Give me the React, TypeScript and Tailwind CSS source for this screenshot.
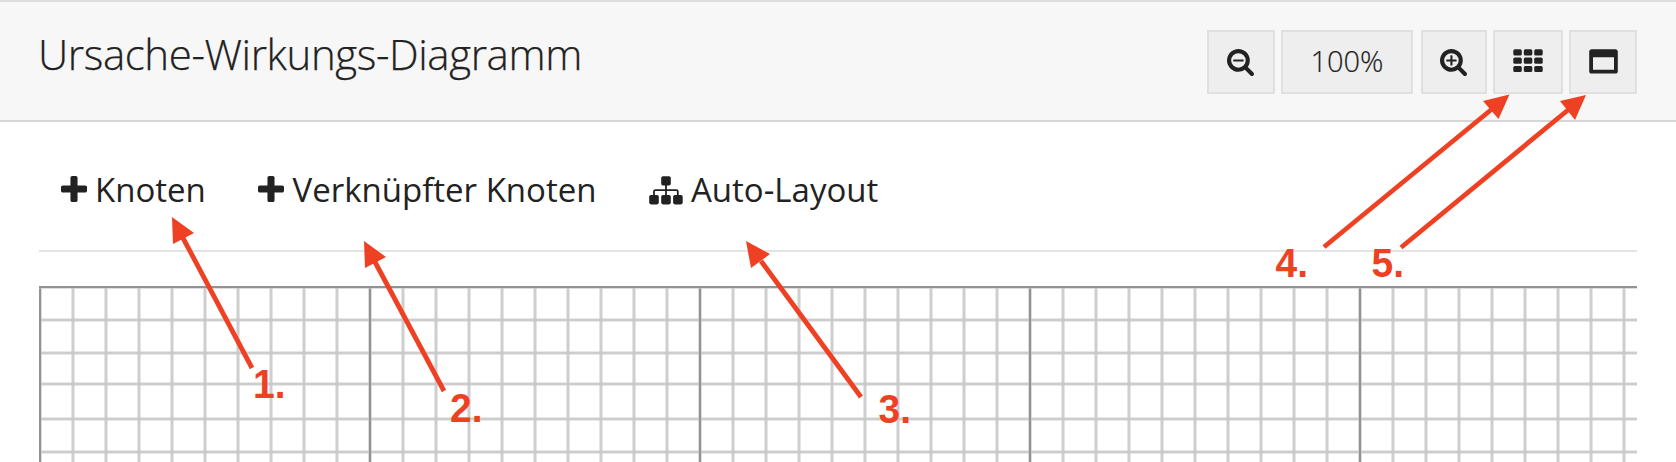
import React from 'react';

const RED = '#ee4123';
const SEARCH_RING =
  'M1216 832q0-185-131.5-316.5t-316.5-131.5-316.5 131.5-131.5 316.5 131.5 316.5 316.5 131.5 316.5-131.5 131.5-316.5zm512 832q0 53-37.5 90.5t-90.5 37.5q-54 0-90-38l-343-342q-179 124-399 124-143 0-273.5-55.5t-225-150-150-225-55.5-273.5 55.5-273.5 150-225 225-150 273.5-55.5 273.5 55.5 225 150 150 225 55.5 273.5q0 220-124 399l343 343q37 37 37 90z';

function SearchIcon({ plus = false }: { plus?: boolean }) {
  return (
    <svg className="mr-[2px] h-[27px] w-[27px]" viewBox="64 128 1664 1664" fill="currentColor">
      <path d={SEARCH_RING} />
      <rect x="448" y="768" width="640" height="128" rx="32" />
      {plus && <rect x="704" y="512" width="128" height="640" rx="32" />}
    </svg>
  );
}

function GridIcon() {
  return (
    <svg className="h-[24px] w-[30px]" viewBox="0 0 30 24" fill="currentColor">
      {[0.3, 10.8, 21.2].map((x) =>
        [0.3, 8.6, 16.9].map((y) => <rect key={`${x}-${y}`} x={x} y={y} width="8.5" height="6.2" rx="1.6" />),
      )}
    </svg>
  );
}

function WindowIcon() {
  return (
    <svg className="h-[25px] w-[29px]" viewBox="0 0 29 25" fill="currentColor" fillRule="evenodd">
      <path d="M2.8 0.2H26.2A2.6 2.6 0 0 1 28.8 2.8V22A2.6 2.6 0 0 1 26.2 24.6H2.8A2.6 2.6 0 0 1 0.2 22V2.8A2.6 2.6 0 0 1 2.8 0.2ZM4 8.2V20.8H25V8.2Z" />
    </svg>
  );
}

function PlusIcon() {
  return (
    <svg className="h-[26px] w-[26px] shrink-0" viewBox="192 128 1408 1408" fill="currentColor">
      <path d="M1600 736v192q0 40-28 68t-68 28h-416v416q0 40-28 68t-68 28h-192q-40 0-68-28t-28-68v-416h-416q-40 0-68-28t-28-68v-192q0-40 28-68t68-28h416v-416q0-40 28-68t68-28h192q40 0 68 28t28 68v416h416q40 0 68 28t28 68z" />
    </svg>
  );
}

function SitemapIcon() {
  return (
    <svg className="h-[29px] w-[34px] shrink-0" viewBox="0 0 34 29" fill="currentColor">
      <rect x="12.2" y="0.2" width="9.6" height="9.4" rx="1.8" />
      <rect x="0.2" y="19" width="9.6" height="9.4" rx="1.8" />
      <rect x="12.2" y="19" width="9.6" height="9.4" rx="1.8" />
      <rect x="24.1" y="19" width="9.6" height="9.4" rx="1.8" />
      <path d="M17 9V20M5 20V15.6Q5 14.2 6.4 14.2H27.4Q28.8 14.2 28.8 15.6V20" fill="none" stroke="currentColor" strokeWidth="1.8" />
    </svg>
  );
}

const box = 'flex h-16 items-start justify-center border-2 border-[#e0e0e0] bg-[#eeeeee]';

const columns = Array.from({ length: 49 }, (_, i) => i);
const rows = [33, 66, 97, 132, 165];

function Canvas() {
  return (
    <svg className="block h-[176px] w-[1598px]" viewBox="0 0 1598 176" shapeRendering="crispEdges">
      {rows.map((y) => (
        <g key={y}>
          <rect x="0" y={y - 1} width="1598" height="4" fill="#e8e8e8" />
          <rect x="0" y={y} width="1598" height="2" fill="#cdcdcd" />
        </g>
      ))}
      {columns.filter((i) => i % 10 !== 0).map((i) => (
        <g key={i}>
          <rect x={i * 33 - 1} y="0" width="4" height="176" fill="#c8c8c8" fillOpacity="0.45" />
          <rect x={i * 33} y="0" width="2" height="176" fill="#c8c8c8" fillOpacity="0.8" />
        </g>
      ))}
      {columns.filter((i) => i % 10 === 0).map((i) => (
        <g key={i}>
          <rect x={i * 33 - 1} y="0" width="4" height="176" fill="#c8c8c8" fillOpacity="0.6" />
          <rect x={i * 33} y="0" width="2" height="176" fill="#929292" />
        </g>
      ))}
      <rect x="0" y="0" width="1598" height="3" fill="#c8c8c8" fillOpacity="0.6" />
      <rect x="0" y="0" width="1598" height="2" fill="#929292" />
    </svg>
  );
}

type Arrow = { line: [number, number, number, number]; head: string; label: string; x: number; y: number };

const arrows: Arrow[] = [
  { line: [252, 368, 183, 238], head: '172,217 194,233 173,244', label: '1.', x: 253, y: 398 },
  { line: [444, 391, 375, 262], head: '364,241 386,257 365,268', label: '2.', x: 450, y: 421.5 },
  { line: [861, 397, 761, 261], head: '746,241 770,254 751,268', label: '3.', x: 878.5, y: 422.5 },
  { line: [1324, 247, 1492, 109], head: '1509.5,94.5 1498.5,119 1483,101', label: '4.', x: 1275.5, y: 277 },
  { line: [1401, 247.5, 1568, 110], head: '1586,95 1575,120 1560,101', label: '5.', x: 1371.5, y: 277 },
];

export default function App() {
  return (
    <div className="relative flex h-[462px] w-[1676px] flex-col overflow-hidden bg-white font-['Open_Sans',sans-serif] text-[#222222]">
      <header className="flex h-[122px] shrink-0 items-start justify-between border-t-2 border-b-2 border-t-[#dddddd] border-b-[#d6d6d6] bg-[#f7f7f7] pr-[39px] pl-[38px]">
        <h1 className="pt-[22px] text-[42px] leading-[60px] font-light tracking-[-0.4px] whitespace-nowrap [-webkit-text-stroke:0.25px_#222222]">
          Ursache-Wirkungs-Diagramm
        </h1>
        <div className="flex pt-7">
          <button className={`${box} w-[68px] pt-[17px]`}><SearchIcon /></button>
          <div className={`${box} ml-1.5 w-[132px] pt-2 text-[29px] leading-[42px] font-light [-webkit-text-stroke:0.2px_#222222]`}>100%</div>
          <button className={`${box} ml-2 w-[66px] pt-[17px]`}><SearchIcon plus /></button>
          <button className={`${box} ml-1.5 w-[70px] pt-[17px]`}><GridIcon /></button>
          <button className={`${box} ml-1.5 w-[68px] pt-[17px]`}><WindowIcon /></button>
        </div>
      </header>
      <main className="flex flex-col px-[39px]">
        <nav className="flex h-[130px] items-start border-b-2 border-[#e3e3e3] pt-[44px] pl-[21.5px] text-[33px] leading-[48px]">
          <button className="flex w-[197.5px] items-start gap-[8.5px]"><span className="pt-[10px]"><PlusIcon /></span>Knoten</button>
          <button className="flex w-[391px] items-start gap-[8.5px] whitespace-nowrap"><span className="pt-[10px]"><PlusIcon /></span>Verknüpfter Knoten</button>
          <button className="flex items-start gap-[8px] whitespace-nowrap"><span className="pt-[10px]"><SitemapIcon /></span>Auto-Layout</button>
        </nav>
        <div className="pt-[34px]"><Canvas /></div>
      </main>
      <svg className="pointer-events-none absolute inset-0 h-[462px] w-[1676px]" viewBox="0 0 1676 462" fill={RED}>
        {arrows.map(({ line, head, label, x, y }) => (
          <g key={label}>
            <line x1={line[0]} y1={line[1]} x2={line[2]} y2={line[3]} stroke={RED} strokeWidth="4.8" />
            <polygon points={head} />
            <text x={x} y={y} fontFamily="Liberation Sans, sans-serif" fontWeight="700" fontSize="40" textLength="32.5" lengthAdjust="spacingAndGlyphs">{label}</text>
          </g>
        ))}
      </svg>
    </div>
  );
}
